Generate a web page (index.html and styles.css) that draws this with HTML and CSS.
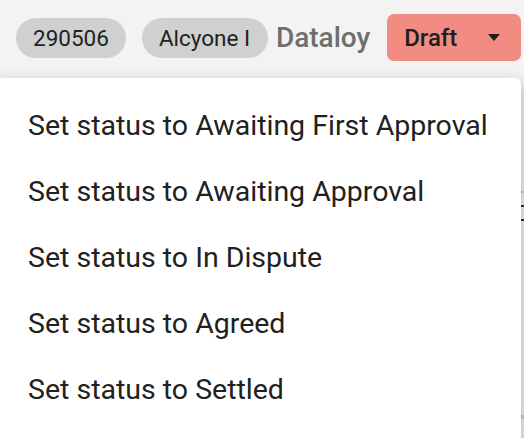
FILE: index.html
```html
<!DOCTYPE html>
<html>
<head>
<meta charset="utf-8">
<link rel="stylesheet" href="styles.css">
</head>
<body>
<div class="page">
  <header class="header">
    <span class="chip">290506</span>
    <span class="chip chip-clip">Alcyone I</span>
    <span class="company">Dataloy</span>
    <button class="status">
      <span>Draft</span>
      <svg class="caret" width="12" height="7" viewBox="0 0 12 7"><path d="M0 0h12L6 7z" fill="#1e1e1e"/></svg>
    </button>
  </header>
  <main class="content">
    <div class="row"></div>
    <div class="row row-text"><span>0</span></div>
    <div class="row"></div>
  </main>
  <ul class="menu">
    <li class="item">Set status to Awaiting First Approval</li>
    <li class="item">Set status to Awaiting Approval</li>
    <li class="item">Set status to In Dispute</li>
    <li class="item">Set status to Agreed</li>
    <li class="item">Set status to Settled</li>
  </ul>
</div>
</body>
</html>
```
FILE: styles.css
```css
* { box-sizing: border-box; }
html, body { margin: 0; padding: 0; }
body {
  font-family: Roboto, "Liberation Sans", sans-serif;
  background: #f3f3f3;
  width: 524px;
  height: 438px;
  overflow: hidden;
}
.page { position: relative; width: 524px; height: 438px; }
.header {
  display: flex;
  align-items: center;
  height: 75px;
  padding: 0 0 0 16px;
  white-space: nowrap;
}
.chip {
  display: inline-flex;
  align-items: center;
  height: 40px;
  padding: 0 17px;
  border-radius: 20px;
  background: #d0d0d0;
  color: #222;
  font-size: 22.5px;
  margin-right: 16px;
  flex: none;
}
.chip-clip { width: 126px; overflow: hidden; margin-right: 8px; }
.company {
  font-size: 28px;
  font-weight: 500;
  color: #6e6e6e;
  margin-right: 17px;
}
.status {
  display: flex;
  align-items: center;
  justify-content: space-between;
  width: 134px;
  height: 47px;
  padding: 0 21px 0 17px;
  border: none;
  border-radius: 7px;
  background: #f28b82;
  color: #1e1e1e;
  font-family: inherit;
  font-size: 24px;
  font-weight: 500;
  flex: none;
}
.caret { display: block; }
.content { padding-top: 116px; }
.row { height: 2px; background: #cfcfcf; }
.row-text { height: 224px; background: none; position: relative; border-bottom: 2px solid #cfcfcf; }
.row-text span { position: absolute; left: 516px; top: 8px; font-size: 22px; color: #222; }
.menu {
  position: absolute;
  left: -4px;
  top: 78px;
  width: 525px;
  height: 370px;
  margin: 0;
  padding: 15px 0;
  list-style: none;
  background: #fff;
  border-radius: 6px;
  box-shadow: 0 5px 5px -3px rgba(0,0,0,0.2), 0 8px 10px 1px rgba(0,0,0,0.14), 0 3px 14px 2px rgba(0,0,0,0.12);
}
.item {
  height: 66px;
  padding: 12px 0 12px 32px;
  font-size: 28.5px;
  line-height: 42px;
  color: #212121;
  white-space: nowrap;
}
```
